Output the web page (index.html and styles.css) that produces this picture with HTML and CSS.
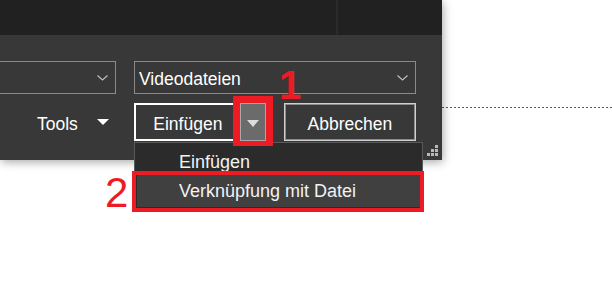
FILE: index.html
```html
<!DOCTYPE html>
<html lang="de">
<head>
  <meta charset="UTF-8" />
  <meta name="viewport" content="width=device-width, initial-scale=1.0" />
  <title>Einfügen</title>
  <link rel="stylesheet" href="styles.css">
</head>
<body>
  <div class="screen">
    <div class="dialog">
      <div class="dialog-top">
        <div class="top-left"></div>
        <div class="top-right"></div>
      </div>
      <div class="dialog-body">
        <div class="row fields">
          <div class="combo combo-name">
            <span></span>
            <svg class="chevron" width="11" height="6" viewBox="0 0 11 6"><path d="M0.5 0.5 L5.5 5 L10.5 0.5" fill="none" stroke="#bdbdbd" stroke-width="1.2"/></svg>
          </div>
          <div class="combo combo-type">
            <span>Videodateien</span>
            <svg class="chevron" width="11" height="6" viewBox="0 0 11 6"><path d="M0.5 0.5 L5.5 5 L10.5 0.5" fill="none" stroke="#bdbdbd" stroke-width="1.2"/></svg>
          </div>
        </div>
        <div class="row actions">
          <button class="tools">Tools
            <svg width="12" height="6" viewBox="0 0 12 6"><path d="M0 0 H12 L6 6 Z" fill="#fff"/></svg>
          </button>
          <div class="split">
            <button class="split-main">Einfügen</button>
            <button class="split-arrow">
              <svg width="12" height="7" viewBox="0 0 12 7"><path d="M0 0 H12 L6 7 Z" fill="#dcdcdc"/></svg>
            </button>
          </div>
          <button class="btn-cancel">Abbrechen</button>
        </div>
        <svg class="grip" width="12" height="12" viewBox="0 0 12 12">
          <rect x="8" y="0" width="3" height="3" fill="#b8b8b8"/>
          <rect x="4" y="4" width="3" height="3" fill="#b8b8b8"/>
          <rect x="8" y="4" width="3" height="3" fill="#b8b8b8"/>
          <rect x="0" y="8" width="3" height="3" fill="#b8b8b8"/>
          <rect x="4" y="8" width="3" height="3" fill="#b8b8b8"/>
          <rect x="8" y="8" width="3" height="3" fill="#b8b8b8"/>
        </svg>
      </div>
      <ul class="menu">
        <li class="menu-item first">Einfügen</li>
        <li class="menu-item active">Verknüpfung mit Datei</li>
      </ul>
    </div>
    <div class="backdrop">
      <div class="dots"></div>
    </div>

    <div class="mark-box box-1"></div>
    <div class="mark-box box-2"></div>
    <span class="mark-num num-1">1</span>
    <span class="mark-num num-2">2</span>
  </div>
</body>
</html>
```

FILE: styles.css
```css
body {
  margin: 0;
  background: #fff;
  font-family: 'Liberation Sans', Arial, sans-serif;
  font-size: 17.5px;
  color: #fff;
}
.screen {
  position: relative;
  display: flex;
  height: 301px;
  overflow: hidden;
}
.dialog {
  position: relative;
  flex: none;
  width: 442px;
  height: 160px;
  background: #383838;
  box-shadow: 1px 2px 9px rgba(0,0,0,0.35);
  z-index: 1;
}
.dialog-top {
  display: flex;
  height: 35px;
  background: #212121;
}
.top-left {
  width: 336px;
  border-right: 2px solid #2b2b2b;
}
.dialog-body {
  padding-top: 26px;
}
.row {
  display: flex;
}
.fields {
  height: 33px;
}
.combo {
  box-sizing: border-box;
  display: flex;
  align-items: center;
  justify-content: space-between;
  height: 33px;
  border: 1px solid #8a8a8a;
  padding: 3px 7px 0 4px;
}
.combo-name {
  width: 116px;
  border-left: 0;
}
.combo-type {
  width: 282px;
  margin-left: 18px;
}
.chevron {
  margin-top: -3px;
}
.actions {
  margin-top: 9px;
  height: 38px;
}
button {
  font: inherit;
  color: #fff;
  background: none;
  border: 0;
  padding: 0;
  cursor: pointer;
}
.tools {
  display: flex;
  align-items: center;
  gap: 19px;
  margin-left: 37px;
  padding-top: 4px;
}
.tools svg {
  margin-top: -4px;
}
.split {
  display: flex;
  margin-left: 25px;
}
.split-main {
  box-sizing: border-box;
  width: 106px;
  height: 38px;
  border: 2px solid #fff;
  border-right: 0;
  padding-top: 4px;
}
.split-arrow {
  box-sizing: border-box;
  display: flex;
  align-items: center;
  justify-content: center;
  width: 26px;
  height: 38px;
  background: #6b6b6b;
  border: 1px solid #a8a8a8;
  padding-top: 2px;
}
.btn-cancel {
  box-sizing: border-box;
  width: 132px;
  height: 38px;
  margin-left: 18px;
  border: 1px solid #d0d0d0;
  box-shadow: inset 0 0 0 1px #8c8c8c;
  padding-top: 4px;
}
.grip {
  position: absolute;
  right: 3px;
  bottom: 3px;
}
.menu {
  position: absolute;
  left: 134px;
  top: 142px;
  box-sizing: border-box;
  width: 289px;
  margin: 0;
  padding: 1px 2px;
  list-style: none;
  background: #2b2b2b;
  border: 1px solid #5a5a5a;
  font-size: 18px;
  z-index: 2;
}
.menu-item {
  box-sizing: border-box;
  display: flex;
  align-items: center;
  padding-left: 42px;
  color: #f2f2f2;
}
.menu-item.first {
  height: 31px;
  padding-top: 5px;
}
.menu-item.active {
  height: 32px;
  background: #404040;
}
.backdrop {
  flex: 1;
  padding-top: 107px;
}
.dots {
  height: 1px;
  background: repeating-linear-gradient(90deg, #5a5a5a 0 2px, transparent 2px 4px);
}
.mark-box {
  position: absolute;
  box-sizing: border-box;
  border: 4px solid #ed1c24;
  z-index: 3;
}
.box-1 {
  left: 233px;
  top: 96px;
  width: 40px;
  height: 50px;
  border-width: 7px 7px 5px 7px;
}
.box-2 {
  left: 132px;
  top: 171px;
  width: 292px;
  height: 41px;
}
.mark-num {
  position: absolute;
  line-height: 1;
  color: #ed1c24;
  z-index: 3;
}
.num-1 {
  left: 279px;
  top: 65px;
  font-size: 40px;
  font-weight: bold;
}
.num-2 {
  left: 105px;
  top: 172px;
  font-size: 42px;
}
```
